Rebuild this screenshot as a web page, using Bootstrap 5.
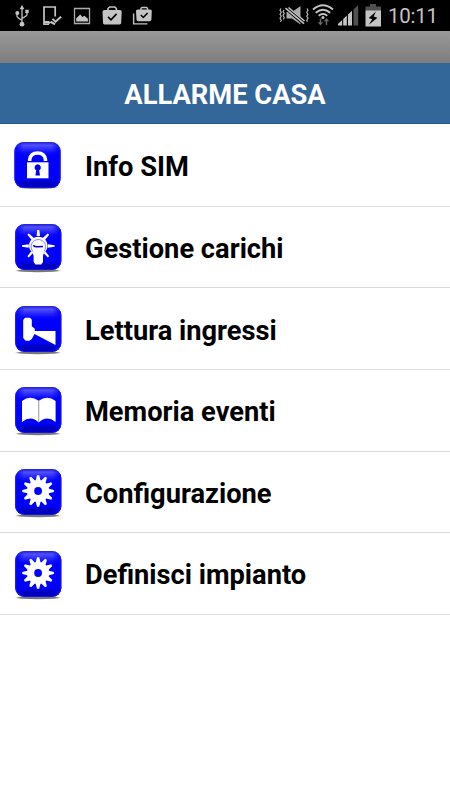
<!DOCTYPE html>
<html lang="it">
<head>
<meta charset="utf-8">
<meta name="viewport" content="width=device-width, initial-scale=1">
<title>Allarme Casa</title>
<link href="https://cdn.jsdelivr.net/npm/bootstrap@5.3.0/dist/css/bootstrap.min.css" rel="stylesheet">
<style>
body { font-family: Roboto, sans-serif; min-height: 800px; overflow: hidden; }
.status-bar { height: 31px; background: #000; color: #c4c4c4; }
.status-bar svg { display: block; height: 31px; flex: none; }
.clock { font-size: 20.5px; line-height: 32px; width: 63px; padding-left: 1px; letter-spacing: -.25px; white-space: nowrap; }
.strip { height: 32px; background: linear-gradient(#999, #7d7d7d); }
.title-bar { height: 61px; background: #336699; border-bottom: 1px solid #24598f; font-size: 27.3px; line-height: 61px; padding-top: 2px; }
.menu { padding-top: 1px; }
.menu.list-group-flush > .list-group-item { height: 81.67px; padding: 0 0 0 10px; border: 0; border-bottom: 1px solid #dadada; color: #000; font-size: 27.25px; line-height: 1; }
.menu svg { width: 56px; height: 58px; flex: none; margin-right: 19px; }
.menu-label { padding-top: 5px; white-space: nowrap; }
</style>
<script src="https://cdn.jsdelivr.net/npm/bootstrap@5.3.0/dist/js/bootstrap.bundle.min.js"></script>
</head>
<body class="bg-white m-0">
<svg width="0" height="0" class="position-absolute" aria-hidden="true">
  <defs>
    <linearGradient id="shine" x1="0" y1="0" x2="0" y2="1">
      <stop offset="0" stop-color="#1d1dcb"/><stop offset=".07" stop-color="#5050ff"/><stop offset=".24" stop-color="#0909ff"/><stop offset=".3" stop-color="#00f"/>
      <stop offset=".8" stop-color="#0000fc"/><stop offset=".9" stop-color="#0000b4"/><stop offset="1" stop-color="#0000d8"/>
    </linearGradient>
    <linearGradient id="sides"><stop offset="0" stop-color="#00f"/><stop offset=".2" stop-color="#00f" stop-opacity="0"/><stop offset=".8" stop-color="#00f" stop-opacity="0"/><stop offset="1" stop-color="#00f"/></linearGradient>
    <filter id="soft" x="-20%" y="-100%" width="140%" height="300%"><feGaussianBlur stdDeviation="1 .6"/></filter>
    <symbol id="tile" viewBox="0 0 56 58">
      <rect x="5" y="6" width="46" height="46" rx="9" fill="url(#shine)"/>
      <rect x="5" y="6" width="46" height="46" rx="9" fill="url(#sides)"/>
      <rect x="5.500" y="6.500" width="45" height="45" rx="8.500" fill="none" stroke="#2a2ae0" stroke-opacity=".5"/>
    </symbol>
    <symbol id="shade" viewBox="0 0 56 58"><ellipse cx="28" cy="52.800" rx="21.500" ry="1.500" fill="#777" filter="url(#soft)"/></symbol>
    <symbol id="gear" viewBox="0 0 56 58">
      <g fill="#fff">
        <g id="teeth"><path id="tooth" d="M25 20 27 12.200H29.200L31.200 20z"/>
        <use href="#tooth" transform="rotate(30 28.1 28)"/><use href="#tooth" transform="rotate(60 28.1 28)"/>
        <use href="#tooth" transform="rotate(90 28.1 28)"/><use href="#tooth" transform="rotate(120 28.1 28)"/><use href="#tooth" transform="rotate(150 28.1 28)"/></g>
        <use href="#teeth" transform="rotate(180 28.1 28)"/>
      </g>
      <circle cx="28.100" cy="28" r="7.500" fill="none" stroke="#fff" stroke-width="7.200"/>
    </symbol>
  </defs>
</svg>

<header>
  <div class="status-bar d-flex">
    <svg width="34" viewBox="0 0 34 31" fill="none" stroke="currentColor" stroke-width="1.300"><path d="M22 8v16M17 13v3.300q0 1.200 5 4M27 11.500v3q0 1.500-5 3.800"/><circle cx="22" cy="24.200" r="2.400" fill="currentColor" stroke="none"/><circle cx="17.300" cy="13" r="2" fill="currentColor" stroke="none"/><path d="M25.300 9.700h3.400v3.400h-3.400zM22 5l2.400 4.200h-4.800z" fill="currentColor" stroke="none"/></svg>
    <svg width="34" viewBox="34 0 34 31" fill="none" stroke="currentColor" stroke-width="1.700"><path d="M55.200 16.500V7H44v17.200h5"/><path d="M44 22h4.500l1.500 1.300M50.500 21.800l4.500 2.500" stroke-width="2.200"/><path d="M52.500 18.800l3 3 5.500-5" stroke-width="1.900"/></svg>
    <svg width="30" viewBox="68 0 30 31"><path d="M74.500 8.500h15v15h-15z" fill="none" stroke="#aaa" stroke-width="1.300"/><path d="M76.200 21.500v-3.200l4-3.800 2.200 2.400 2-1.200 3.500 3v2.800z" fill="currentColor"/></svg>
    <svg width="29" viewBox="98 0 29 31"><path d="M108 11V8.500L109.600 7h5.200l1.600 1.500V11" fill="none" stroke="currentColor" stroke-width="1.600"/><path d="M104.500 10h15.500q1.700 0 1.700 1.700l-.5 11q0 1.700-1.700 1.700h-15q-1.500 0-1.500-1.700l-.5-11q0-1.700 2-1.700z" fill="currentColor"/><path d="M108 16.800l3 3 5.600-6" fill="none" stroke="#000" stroke-width="1.700"/></svg>
    <svg width="30" viewBox="127 0 30 31"><path d="M141 10V8.300l1-.8h4.500l1 .8V10M133.600 13.500v10.400h13.800" fill="none" stroke="currentColor" stroke-width="1.400"/><path d="M137.500 9.500h12.700q1.600 0 1.600 1.600l-.4 8.500q0 1.700-1.700 1.700h-11.500q-1.700 0-1.700-1.700l-.5-8.500q0-1.600 1.500-1.600z" fill="currentColor"/><path d="M140.800 15l2.500 2.500 4.300-4.600" fill="none" stroke="#000" stroke-width="1.500"/></svg>
    <svg class="ms-auto" width="34" viewBox="277 0 34 31" fill="none" stroke="currentColor"><path d="M286.500 12h5.500l8.500-6v18.500l-8.500-6h-5.500z" fill="#aaa" stroke="none"/><path d="M286 7.500l18.500 16" stroke="#000" stroke-width="4.500"/><path d="M285.500 8.200l18.500 15.500M288.500 7.500l16 13.500" stroke-width="1.600"/><path d="M281 8.500l-1 1.700 1.300 2-1.300 2 1.300 2-1.300 2 1.300 2-.8 1.500M284 10l-1 1.500 1.300 2-1.300 2 1.300 2-1 2M307 8.500l1 1.700-1.300 2 1.300 2-1.300 2 1.300 2-1.300 2 .8 1.500" stroke-width="1.100"/></svg>
    <svg width="25" viewBox="311 0 25 31" fill="none" stroke="currentColor"><path d="M313 9.500q10-8.500 20 0M315.800 12.800q7.200-6 14.400 0M318.700 15.700q4.300-3.300 8.600 0" stroke-width="2"/><circle cx="323" cy="17.500" r="1.500" fill="currentColor" stroke="none"/><path d="M320.500 18.500v5.500M326.500 25v-5.500" stroke="#666" stroke-width="1.500"/><path d="M317.800 22.200h5.400l-2.700 3.300zM323.800 21.300h5.400l-2.700-3.300z" fill="#666" stroke="none"/></svg>
    <svg width="25" viewBox="336 0 25 31" fill="currentColor"><path d="M338 25.500v-1.500l4.200-4v5.500zM343.200 25.500V19l3.600-3.500v10zM348 25.500v-11l4-3.800v14.800z"/><path d="M353.500 25.500V9.300l4.700-4v20.200z" fill="#505050"/></svg>
    <svg width="26" viewBox="361 0 26 31"><path d="M370 4h6v2.500h5V11h-15.500V6.500h4.500z" fill="#505050"/><path d="M365.500 10.500H381v16h-15.500z" fill="currentColor"/><path d="M376 11.500l-7.300 6.500 3.500 1.200-3.400 5.500 8.700-7-3.800-1.300z" fill="#000"/></svg>
    <div class="clock">10:11</div>
  </div>
  <div class="strip"></div>
  <h1 class="title-bar m-0 text-white text-center fw-bold">ALLARME CASA</h1>
</header>

<main class="list-group list-group-flush rounded-0 menu fw-bold">
  <a class="list-group-item d-flex align-items-center" href="#">
    <svg viewBox="0 0 56 58"><ellipse cx="28" cy="51" rx="19" ry="2" fill="#999" filter="url(#soft)"/><use href="#tile" x="-.5"/><path d="M19.700 25v-1.500q1-6.500 7.900-6.500t7.900 6.500V25" fill="none" stroke="#fff" stroke-width="3.500"/><path d="M17 26.300h21.500v16H17z" fill="#fff"/><path d="M27.700 28.300a3.200 3.200 0 0 1 1.500 6l.8 5.200h-4.600l.8-5.200a3.200 3.200 0 0 1 1.500-6z" fill="#00e"/></svg>
    <span class="menu-label">Info SIM</span>
  </a>
  <a class="list-group-item d-flex align-items-center" href="#">
    <svg viewBox="0 0 56 58"><use href="#shade"/><use href="#tile" x=".3"/><g fill="#fff"><path d="M27.300 12h2l.7 6h-3.400zM17.400 16.700l1.500-1.200 5 4.500-2.300 2zM39.200 16.700l-1.500-1.200-5 4.500 2.300 2zM12 27.200v1.600l6.800 1v-3.600zM44.600 27.200v1.600l-6.800 1v-3.600zM17.400 38.300l1.400 1.200 4.200-4.500-2-1.600zM39.200 38.300l-1.400 1.200-4.200-4.500 2-1.600z"/></g><path d="M28.300 18.800c5.500 0 9.200 4 9.200 9.200 0 5-4.500 6.500-4.500 10.500v5.500l-1.800 2.500h-5.800L23.600 44v-5.500c0-4-4.500-5.500-4.500-10.500 0-5.200 3.700-9.200 9.200-9.200z" fill="#fff"/><path d="M22.700 33.500c-4-6 0-12 5.600-12s9.700 6 5.600 12" fill="none" stroke="#77f" stroke-width=".9"/><path d="M23.300 27.200q1.500 2 4.500 1.600l5.200-.2" fill="none" stroke="#00c" stroke-width="1.500"/></svg>
    <span class="menu-label">Gestione carichi</span>
  </a>
  <a class="list-group-item d-flex align-items-center" href="#">
    <svg viewBox="0 0 56 58"><use href="#shade"/><use href="#tile" x=".3"/><path d="M15 17.700h5l1.800 2v6.500l3 2.500v2.300H45.500v14L24.500 34l-2.700 5-2.300 1.700h-4L13.200 38V20z" fill="#fff"/></svg>
    <span class="menu-label">Lettura ingressi</span>
  </a>
  <a class="list-group-item d-flex align-items-center" href="#">
    <svg viewBox="0 0 56 58"><use href="#shade"/><use href="#tile" x=".3"/><path d="M12 20q8-6.500 16.700-.2 8.700-6.300 16.900.2v21q-9-7.200-16.900.5Q21 34 12 41z" fill="#fff"/><path d="M28.700 20v21" stroke="#aaa" stroke-width="1.200"/></svg>
    <span class="menu-label">Memoria eventi</span>
  </a>
  <a class="list-group-item d-flex align-items-center" href="#">
    <svg viewBox="0 0 56 58"><use href="#shade"/><use href="#tile" x=".3"/><use href="#gear"/></svg>
    <span class="menu-label">Configurazione</span>
  </a>
  <a class="list-group-item d-flex align-items-center" href="#">
    <svg viewBox="0 0 56 58"><use href="#shade"/><use href="#tile" x=".3"/><use href="#gear"/></svg>
    <span class="menu-label">Definisci impianto</span>
  </a>
</main>
</body>
</html>
